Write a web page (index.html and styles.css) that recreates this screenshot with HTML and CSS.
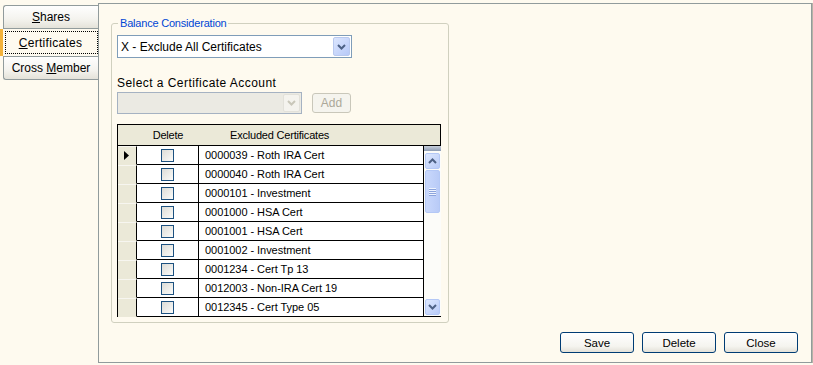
FILE: index.html
```html
<!DOCTYPE html>
<html>
<head>
<meta charset="utf-8">
<link rel="stylesheet" href="styles.css">
</head>
<body>
<div class="app">
  <div class="tabs">
    <div class="tab tab-first"><span><u>S</u>hares</span></div>
    <div class="tab tab-active"><div class="focus"><u>C</u>ertificates</div></div>
    <div class="tab tab-last"><span>Cross <u>M</u>ember</span></div>
  </div>
  <div class="panel">
    <fieldset class="group">
      <legend>Balance Consideration</legend>
      <div class="combo">
        <span class="combo-text">X - Exclude All Certificates</span>
        <span class="combo-btn"><svg width="9" height="6" viewBox="0 0 9 6"><path d="M1 1 L4.5 4.5 L8 1" fill="none" stroke="#4d6185" stroke-width="2"/></svg></span>
      </div>
      <div class="label">Select a Certificate Account</div>
      <div class="acct-row">
        <div class="combo combo-disabled">
          <span class="combo-text"></span>
          <span class="combo-btn"><svg width="9" height="6" viewBox="0 0 9 6"><path d="M1 1 L4.5 4.5 L8 1" fill="none" stroke="#c9c7ba" stroke-width="2"/></svg></span>
        </div>
        <div class="btn btn-disabled">Add</div>
      </div>
      <div class="grid">
        <div class="grid-head">
          <div class="h-rh"></div>
          <div class="h-del">Delete</div>
          <div class="h-cert">Excluded Certificates</div>
        </div>
        <div class="grid-body">
          <div class="rows">
            <div class="row"><div class="rh"><svg width="5" height="9" viewBox="0 0 5 9"><path d="M0 0 L5 4.5 L0 9 Z" fill="#000"/></svg></div><div class="c-del"><span class="chk"></span></div><div class="c-cert">0000039 - Roth IRA Cert</div></div>
            <div class="row"><div class="rh"></div><div class="c-del"><span class="chk"></span></div><div class="c-cert">0000040 - Roth IRA Cert</div></div>
            <div class="row"><div class="rh"></div><div class="c-del"><span class="chk"></span></div><div class="c-cert">0000101 - Investment</div></div>
            <div class="row"><div class="rh"></div><div class="c-del"><span class="chk"></span></div><div class="c-cert">0001000 - HSA Cert</div></div>
            <div class="row"><div class="rh"></div><div class="c-del"><span class="chk"></span></div><div class="c-cert">0001001 - HSA Cert</div></div>
            <div class="row"><div class="rh"></div><div class="c-del"><span class="chk"></span></div><div class="c-cert">0001002 - Investment</div></div>
            <div class="row"><div class="rh"></div><div class="c-del"><span class="chk"></span></div><div class="c-cert">0001234 - Cert Tp 13</div></div>
            <div class="row"><div class="rh"></div><div class="c-del"><span class="chk"></span></div><div class="c-cert">0012003 - Non-IRA Cert 19</div></div>
            <div class="row row-last"><div class="rh"></div><div class="c-del"><span class="chk"></span></div><div class="c-cert">0012345 - Cert Type 05</div></div>
          </div>
          <div class="vscroll">
            <div class="sb-cap"></div>
            <div class="sb-btn"><svg width="9" height="6" viewBox="0 0 9 6"><path d="M1 5 L4.5 1.5 L8 5" fill="none" stroke="#4d6185" stroke-width="2"/></svg></div>
            <div class="sb-thumb"><span class="grip"></span><span class="grip"></span><span class="grip"></span><span class="grip"></span></div>
            <div class="sb-track"></div>
            <div class="sb-btn"><svg width="9" height="6" viewBox="0 0 9 6"><path d="M1 1 L4.5 4.5 L8 1" fill="none" stroke="#4d6185" stroke-width="2"/></svg></div>
          </div>
        </div>
      </div>
    </fieldset>
    <div class="actions">
      <div class="btn">Save</div>
      <div class="btn">Delete</div>
      <div class="btn">Close</div>
    </div>
  </div>
</div>
</body>
</html>
```

FILE: styles.css
```css
* { box-sizing: border-box; }
html, body {
  margin: 0;
  padding: 0;
  background: #fefaef;
  font-family: "Liberation Sans", Arial, sans-serif;
  font-size: 11px;
  color: #000;
  width: 813px;
  height: 365px;
  overflow: hidden;
}
.app {
  display: flex;
  height: 365px;
}
.tabs {
  width: 98px;
  padding-top: 5px;
  display: flex;
  flex-direction: column;
  flex: none;
}
.tab {
  font-size: 12px;
  display: flex;
  align-items: center;
  justify-content: center;
}
.tab-first, .tab-last {
  margin-left: 3px;
  height: 24px;
  border: 1px solid #919b9c;
  border-right: 0;
  background: linear-gradient(#fefefe, #f4f3ee 60%, #e4e2d9);
}
.tab-first { border-radius: 3px 0 0 0; }
.tab-last { border-radius: 0 0 0 3px; height: 24px; }
.tab-active {
  height: 27px;
  border-left: 3px solid #f3b23b;
  background: #fefaef;
  padding: 2px 0 2px 2px;
  align-items: stretch;
  letter-spacing: 0.3px;
}
.focus {
  flex: 1;
  border: 1px dotted #000;
  display: flex;
  align-items: center;
  justify-content: center;
  padding-right: 2px;
}
.panel {
  margin-top: 3px;
  width: 714px;
  height: 360px;
  border: 1px solid #919b9c;
  box-shadow: 1px 0 0 #b5b3a6;
  display: flex;
  flex-direction: column;
  padding: 0 13px 9px 12px;
}
.group {
  margin: 13px 0 0 0;
  width: 338px;
  height: 306px;
  border: 1px solid #d0d0bf;
  border-radius: 3px;
  padding: 5px 0 0 5px;
  min-width: 0;
}
.group legend {
  color: #0046d5;
  padding: 0 2px;
  margin-left: 1px;
  line-height: 13px;
  font-size: 11px;
  letter-spacing: -0.2px;
}
.combo {
  width: 235px;
  height: 23px;
  border: 1px solid #7f9db9;
  background: #fff;
  display: flex;
  align-items: center;
  padding: 1px;
}
.combo-text {
  flex: 1;
  padding-left: 2px;
  font-size: 12px;
}
.combo-btn {
  width: 17px;
  height: 19px;
  border: 1px solid #b9c9ef;
  border-radius: 2px;
  background: linear-gradient(135deg, #dce6fe, #b7c9f8);
  display: flex;
  align-items: center;
  justify-content: center;
}
.label {
  margin-top: 18px;
  font-size: 12px;
  line-height: 14px;
  letter-spacing: 0.45px;
}
.acct-row {
  margin-top: 2px;
  display: flex;
  align-items: center;
  gap: 10px;
}
.combo-disabled {
  width: 185px;
  height: 22px;
  background: #ebeae3;
  border-color: #a5b2c2;
}
.combo-disabled .combo-btn {
  height: 18px;
  border-color: #e2e1da;
  background: #f4f3ee;
}
.btn {
  width: 74px;
  height: 21px;
  border: 1px solid #003c74;
  border-radius: 3px;
  background: linear-gradient(#ffffff, #f5f4ef 70%, #e3e1d8);
  display: flex;
  align-items: center;
  justify-content: center;
  font-size: 11.5px;
}
.btn-disabled {
  width: 39px;
  height: 20px;
  border-color: #c9c7ba;
  color: #aca899;
  background: #f5f4ee;
  font-size: 12px;
}
.grid {
  margin-top: 10px;
  width: 324px;
  height: 193px;
  border: 1px solid #000;
  border-right: 0;
  background: #fff;
  font-size: 11px;
}
.grid-head {
  height: 21px;
  display: flex;
  background: #ebe9d8;
  border-bottom: 1px solid #000;
  border-right: 1px solid #000;
  align-items: center;
  letter-spacing: -0.2px;
}
.h-rh { width: 19px; }
.h-del { width: 62px; text-align: center; }
.h-cert { width: 225px; padding-left: 31px; }
.grid-body {
  display: flex;
  height: 170px;
}
.rows {
  width: 306px;
  border-right: 1px solid #000;
}
.row {
  height: 19px;
  display: flex;
  border-bottom: 1px solid #000;
}
.row-last { height: 18px; border-bottom: 0; }
.rh {
  width: 19px;
  background: #ebe9d8;
  border-right: 1px solid #000;
  border-top: 1px solid #f7f6f0;
  display: flex;
  align-items: center;
  padding-left: 6px;
}
.row .rh { margin-bottom: -1px; border-bottom: 1px solid #ebe9d8; }
.c-del {
  width: 62px;
  border-right: 1px solid #000;
  display: flex;
  align-items: center;
  justify-content: center;
}
.chk {
  width: 13px;
  height: 13px;
  border: 1px solid #1c5180;
  background: linear-gradient(135deg, #dcdcd7, #fbfbf9);
}
.c-cert {
  flex: 1;
  padding-left: 6px;
  display: flex;
  align-items: center;
  letter-spacing: -0.05px;
}
.vscroll {
  width: 17px;
  display: flex;
  flex-direction: column;
  background: #fcfcf9;
  padding: 0 1px 1px 1px;
}
.sb-cap {
  height: 5px;
  margin: 0 -1px 2px -1px;
  background: linear-gradient(#c7d0dc, #8e9cb4);
}
.sb-btn {
  height: 16px;
  border: 1px solid #b4c8f6;
  border-radius: 2px;
  background: linear-gradient(135deg, #dde8ff, #b9cbf7);
  display: flex;
  align-items: center;
  justify-content: center;
}
.sb-thumb {
  margin-top: 1px;
  height: 43px;
  border: 1px solid #b4c8f6;
  border-radius: 2px;
  background: linear-gradient(90deg, #c9d8fc, #b9cbf7);
  display: flex;
  flex-direction: column;
  align-items: center;
  justify-content: center;
  gap: 1px;
}
.grip {
  width: 7px;
  height: 1px;
  background: #eef3fe;
  box-shadow: 0 1px 0 #8ca4dc;
}
.sb-track { flex: 1; }
.actions {
  margin-top: auto;
  display: flex;
  justify-content: flex-end;
  gap: 8px;
}
```
